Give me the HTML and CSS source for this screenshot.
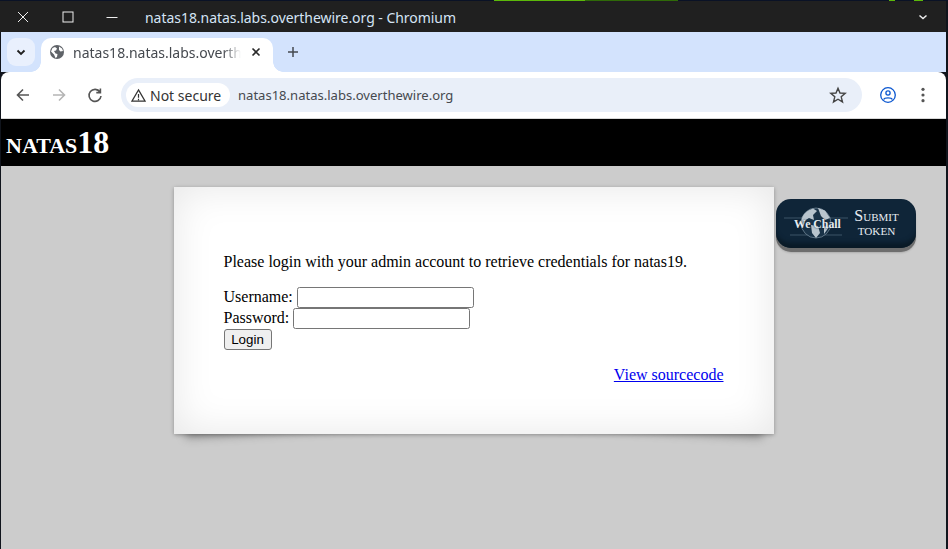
FILE: index.html
```html
<!DOCTYPE html>
<html lang="en">
<head>
<meta charset="utf-8">
<title>natas18</title>
<link rel="stylesheet" href="styles.css">
</head>
<body>
<div class="window">
  <div class="titlebar">
    <div class="winbtns">
      <svg class="winicon" viewBox="0 0 16 16"><path d="M3 3 L13 13 M13 3 L3 13"/></svg>
      <svg class="winicon" viewBox="0 0 16 16"><rect x="3" y="3" width="10" height="10"/></svg>
      <svg class="winicon" viewBox="0 0 16 16"><path d="M1.5 8.5 H12.5"/></svg>
    </div>
    <span class="wintitle">natas18.natas.labs.overthewire.org - Chromium</span>
    <svg class="winchev" viewBox="0 0 12 12"><path d="M2.5 4.5 L6 7.5 L9.5 4.5"/></svg>
  </div>
  <div class="tabstrip">
    <div class="tabsearch"><svg viewBox="0 0 12 12"><path d="M2.5 4.5 L6 8 L9.5 4.5"/></svg></div>
    <div class="tab">
      <svg class="globe" viewBox="0 0 16 16"><circle cx="8" cy="8" r="7" fill="#5f6368"/><path d="M3.5 4 L6 3 L8 4.5 L7 6.5 L5 7 L6.5 9.5 L8.5 10 L8 13 L6.5 14 L5 10.5 L2 7.5Z M10 2.5 L13 4.5 L14 7 L11.5 7.5 L10 6Z" fill="#fff"/></svg>
      <span class="tabtitle">natas18.natas.labs.overth</span>
      <svg class="tabclose" viewBox="0 0 10 10"><path d="M1.5 1.5 L8.5 8.5 M8.5 1.5 L1.5 8.5"/></svg>
    </div>
    <svg class="newtab" viewBox="0 0 12 12"><path d="M6 1 V11 M1 6 H11"/></svg>
  </div>
  <div class="toolbar">
    <svg class="navicon" viewBox="0 0 16 16"><path d="M14 8 H2.5 M8 2.5 L2.5 8 L8 13.5"/></svg>
    <svg class="navicon faded" viewBox="0 0 16 16"><path d="M2 8 H13.5 M8 2.5 L13.5 8 L8 13.5"/></svg>
    <svg class="navicon" viewBox="0 0 16 16"><path d="M13 5 A6 6 0 1 0 14 9 M13.4 1.5 V5.6 H9.3"/></svg>
    <div class="omnibox">
      <div class="chip">
        <svg class="warn" viewBox="0 0 16 16"><path d="M8 2 L15 14 H1 Z M8 6.5 V10.5 M8 11.5 V13"/></svg>
        <span>Not secure</span>
      </div>
      <span class="url">natas18.natas.labs.overthewire.org</span>
      <svg class="star" viewBox="0 0 18 18"><path d="M9 2.2 L11 7 L16.2 7.4 L12.2 10.8 L13.5 15.9 L9 13.2 L4.5 15.9 L5.8 10.8 L1.8 7.4 L7 7Z"/></svg>
    </div>
    <svg class="profile" viewBox="0 0 18 18"><circle cx="9" cy="9" r="7.3"/><circle cx="9" cy="7" r="2.1"/><path d="M4.6 13.6 C5.5 11.3 12.5 11.3 13.4 13.6"/></svg>
    <svg class="kebab" viewBox="0 0 4 16"><circle cx="2" cy="2.3" r="1.6"/><circle cx="2" cy="8" r="1.6"/><circle cx="2" cy="13.7" r="1.6"/></svg>
  </div>
  <div class="page">
    <h1 class="sitehead">natas18</h1>
    <a class="wechall" href="#">
      <svg class="wc-globe" viewBox="0 0 64 36">
        <path class="wc-rays" d="M0 13 H64 M6 30 H58"/>
        <circle class="wc-ball" cx="32" cy="18" r="15"/>
        <path class="wc-land" d="M18 13 C20 8 24 5 29 3.5 L33 6 L29 10 L30 15 L25 13 L20 16 L18.5 21 L17 18Z M34 3 L41 5.5 L46 13 L41 15 L37 11Z M27 20 L34 21 L36 28 L32 33 L28 28Z M40 21 L45 22 L40 29Z"/>
      </svg>
      <span class="wc-name">We Chall</span>
      <span class="wc-label"><span class="wc-submit">Submit</span><span class="wc-token">token</span></span>
    </a>
    <div class="content">
      <p class="lead">Please login with your admin account to retrieve credentials for natas19.</p>
      <form class="login">
        Username: <input class="field" type="text"><br>
        Password: <input class="field" type="password"><br>
        <button class="loginbtn" type="button">Login</button>
      </form>
      <div class="viewsource"><a href="#">View sourcecode</a></div>
    </div>
  </div>
</div>
</body>
</html>
```
FILE: styles.css
```css
* { box-sizing: border-box; }
html, body { margin: 0; height: 100%; overflow: hidden; }
body {
  background: linear-gradient(90deg, #0a1226 0, #0a1226 494px, #5cb80a 494px, #5cb80a 585px, #2f6a08 585px, #2f6a08 678px, #0a1226 678px, #0a1226 889px, #5cb80a 889px, #5cb80a 895px, #0a1226 895px, #0a1226 914px, #5cb80a 914px, #5cb80a 923px, #0a1226 923px);
  background-size: 100% 1px;
  background-repeat: no-repeat;
  background-color: #10141c;
}
.window { display: flex; flex-direction: column; height: 549px; padding: 1px 2px 0 1px; font-family: "Noto Sans", sans-serif; }

.titlebar { flex: none; height: 31px; background: #202020; display: flex; align-items: center; color: #d5e4f5; margin-left: -1px; padding-top: 2px; }
.winbtns { display: flex; gap: 29px; padding-left: 15px; width: 145px; margin-top: -2px; }
.winicon { width: 16px; height: 16px; fill: none; stroke: #eee; stroke-width: 1; }
.wintitle { font-size: 14px; letter-spacing: -.04px; flex: 1; }
.winchev { width: 12px; height: 12px; fill: none; stroke: #eee; stroke-width: 1.5; margin: -2px 17px 0 0; }

.tabstrip { flex: none; height: 40px; background: #d3e3fd; display: flex; align-items: flex-end; }
.tabsearch { width: 28px; height: 28px; margin: 0 6px 6px 6px; border-radius: 9px; background: #e9f0fd; display: flex; align-items: center; justify-content: center; }
.tabsearch svg { width: 12px; height: 12px; fill: none; stroke: #1f1f1f; stroke-width: 1.8; }
.tab { position: relative; width: 232px; height: 34px; background: #fff; border-radius: 10px 10px 0 0; display: flex; align-items: center; padding: 0 0 6px 8px; }
.tab::before, .tab::after { content: ""; position: absolute; bottom: 0; width: 10px; height: 10px; }
.tab::before { left: -10px; background: radial-gradient(circle at 0 0, transparent 9.5px, #fff 10px); }
.tab::after { right: -10px; background: radial-gradient(circle at 100% 0, transparent 9.5px, #fff 10px); }
.globe { width: 16px; height: 16px; flex: none; }
.tabtitle { font-size: 14px; color: #45494f; margin-left: 8px; width: 168px; white-space: nowrap; overflow: hidden; -webkit-mask-image: linear-gradient(90deg, #000 150px, transparent 168px); mask-image: linear-gradient(90deg, #000 150px, transparent 168px); }
.tabclose { width: 10px; height: 10px; margin-left: 10px; fill: none; stroke: #2a2a2a; stroke-width: 1.6; }
.newtab { width: 12px; height: 12px; margin: 0 0 14px 14px; fill: none; stroke: #45494f; stroke-width: 1.5; }

.toolbar { flex: none; height: 47px; background: #fff; border-bottom: 1px solid #d8d8d8; border-radius: 8px 8px 0 0; display: flex; align-items: center; padding-left: 14px; }
.navicon { width: 16px; height: 16px; margin-right: 20px; fill: none; stroke: #555; stroke-width: 1.6; flex: none; }
.navicon.faded { stroke: #b5b5b5; }
.omnibox { margin-left: -2px; width: 741px; height: 34px; background: #e9eff9; border-radius: 17px; display: flex; align-items: center; padding: 0 15px 0 5px; flex: none; }
.chip { width: 104px; height: 24px; background: #fff; border-radius: 12px; display: flex; align-items: center; gap: 4px; padding: 0 0 0 5px; font-size: 14px; color: #333; flex: none; }
.warn { width: 15px; height: 15px; fill: none; stroke: #333; stroke-width: 1.3; }
.url { font-size: 13.06px; color: #45494f; margin-left: 8px; flex: 1; }
.star { width: 18px; height: 18px; fill: none; stroke: #444; stroke-width: 1.4; }
.profile { width: 18px; height: 18px; margin-left: 17px; fill: none; stroke: #0b57d0; stroke-width: 1.3; flex: none; }
.kebab { width: 4px; height: 16px; margin-left: 24px; fill: #555; flex: none; }

.page { position: relative; z-index: 0; flex: 1; background: #ccc; font-family: "Liberation Serif", serif; font-size: 16px; color: #000; }
.sitehead { margin: 0; height: 47px; background: #000; color: #fff; font-size: 32px; line-height: 47px; font-weight: bold; font-variant: small-caps; padding-left: 5px; }

.content { position: relative; width: 600px; height: 247px; margin: 21px 0 0 173px; padding: 66px 50.5px 0 49.5px; background: #fff; box-shadow: 0 1px 4px rgba(0,0,0,.3), inset 0 0 40px rgba(0,0,0,.1); }
.content::before, .content::after { content: ""; position: absolute; z-index: -1; bottom: 19px; top: 80%; left: 10px; width: 50%; max-width: 300px; background: #888; box-shadow: 0 15px 10px #888; transform: rotate(-3deg); }
.content::after { left: auto; right: 10px; transform: rotate(3deg); }
.lead { margin: 0 0 16px; }
.login { line-height: 18px; }
.field { width: 177px; height: 21px; border: 1px solid #767676; border-radius: 2.5px; padding: 1px 2px; background: #fff; margin: 0; }
.loginbtn { font-family: "Liberation Sans", sans-serif; font-size: 13.33px; width: 48px; height: 21px; padding: 0; margin: 0; border: 1px solid #767676; border-radius: 3px; background: #efefef; color: #000; }
.viewsource { text-align: right; margin-top: 16px; }

.wechall { position: absolute; left: 775px; top: 80px; width: 140px; height: 49px; border-radius: 15px; background: #0f2538; box-shadow: inset 0 -7px 4px -2px #0a1a26, 0 4px 0 #6e6e6e, 0 5px 2px rgba(0,0,0,.15); color: #e8edf2; text-decoration: none; display: block; }
.wc-globe { position: absolute; left: 8px; top: 6px; width: 64px; height: 36px; }
.wc-rays { stroke: #6d8496; stroke-width: .7; fill: none; opacity: .7; }
.wc-ball { fill: #1a3348; stroke: #8fa3b2; stroke-width: .6; }
.wc-land { fill: #b9c5ce; }
.wc-name { position: absolute; left: 18px; top: 18px; font-size: 11.8px; font-weight: bold; color: #e6ebef; text-shadow: 0 0 2px #0f2538; white-space: nowrap; }
.wc-label { position: absolute; left: 67px; top: 9px; width: 67px; display: flex; flex-direction: column; align-items: center; }
.wc-submit { font-variant: small-caps; font-size: 16px; line-height: 15px; }
.wc-token { text-transform: uppercase; font-size: 11.2px; line-height: 15px; margin-top: 1px; }
```
